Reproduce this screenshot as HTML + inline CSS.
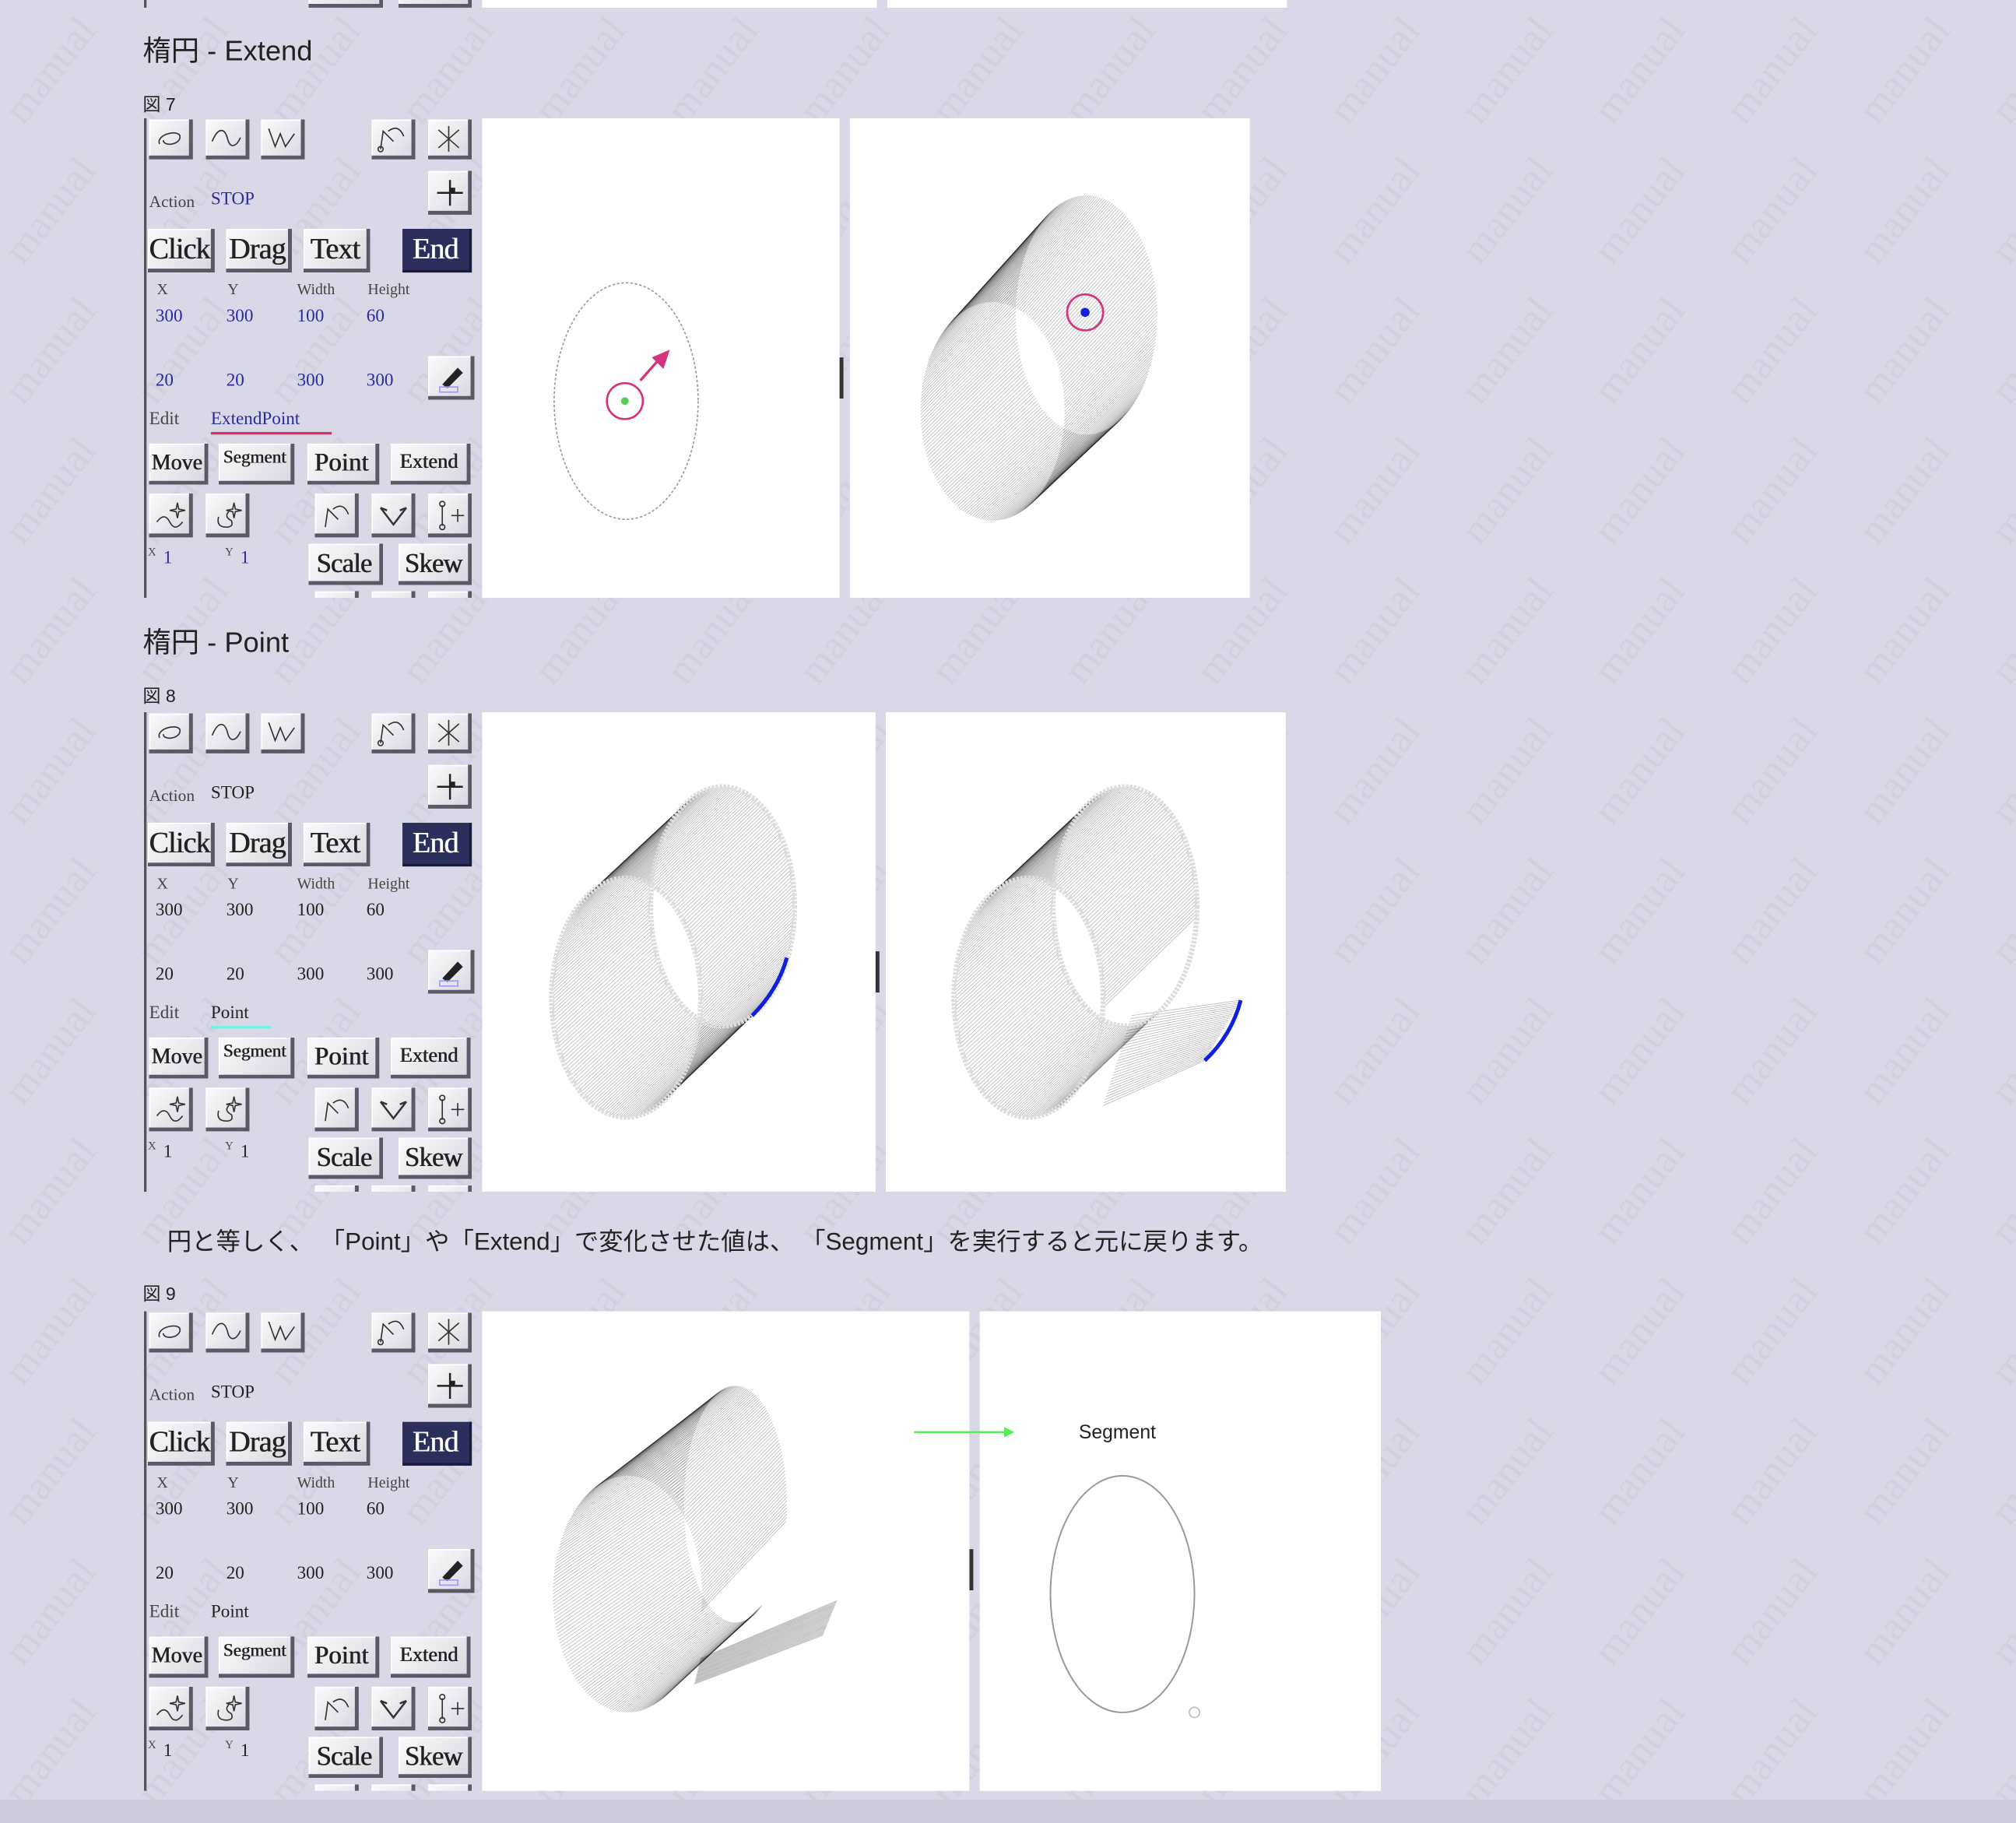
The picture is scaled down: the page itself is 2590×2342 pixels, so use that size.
<!DOCTYPE html>
<html><head><meta charset="utf-8"><style>
html,body{margin:0;padding:0;background:#d8d8e6;overflow:hidden}
#w{position:absolute;left:0;top:0;width:1568px;height:1418px;transform:scale(1.6518,1.6516);transform-origin:0 0;font-family:"Liberation Sans","Noto Sans CJK JP",sans-serif;color:#222}
.a{position:absolute}
.cv{position:absolute;background:#fff}
.p{position:absolute;left:112px;width:263px;height:373px;overflow:hidden;border-left:2px solid #555;box-sizing:border-box}
.b{position:absolute;background:linear-gradient(135deg,#fbfbff,#d6d6e0);box-shadow:inset -3px -3px 0 #5a5a66,inset 1px 1px 0 #fff;font-family:"Liberation Serif",serif;text-align:center;color:#222;box-sizing:border-box;padding-right:3px;text-shadow:0.4px 0 0 #222}
.ib{width:34px;height:31px}
.bb{height:34px;font-size:23px;line-height:32px;letter-spacing:-0.5px}
.sb{height:32px;font-size:17px;line-height:30px}
.end{background:#2c2e5c;box-shadow:inset -2px -2px 0 #1a1b3a;color:#fff;text-shadow:0.4px 0 0 #fff}
.t{position:absolute;font-family:"Liberation Serif",serif;font-size:14px;white-space:nowrap}
.l{position:absolute;font-family:"Liberation Serif",serif;font-size:12px;color:#444}
.bl{color:#2a2a9a}
.ib svg{position:absolute;left:3px;top:3px}
h2{position:absolute;margin:0;font-weight:normal;font-size:22px;left:111px}
.fig{position:absolute;left:111px;font-size:14px}
</style></head><body><div id="w">
<svg class="a" style="left:0;top:0" width="1568" height="1418">
<defs><pattern id="wm" width="103" height="109" patternUnits="userSpaceOnUse"><text x="0" y="0" transform="translate(18,98) rotate(-52)" font-family="Liberation Serif" font-size="32" fill="#d0d0de">manual</text></pattern></defs>
<rect width="1568" height="1418" fill="url(#wm)"/>
<rect y="1400" width="1568" height="18" fill="#cacad8"/>
</svg>

<div class="cv" style="left:375px;top:0;width:307px;height:6px"></div>
<div class="cv" style="left:690px;top:0;width:311px;height:6px"></div>
<div class="b" style="left:240px;top:-26px;width:58px;height:32px"></div>
<div class="b" style="left:310px;top:-26px;width:57px;height:32px"></div>
<div class="a" style="left:112px;top:0;width:2px;height:6px;background:#555"></div>

<h2 style="top:22px">楕円 - Extend</h2>
<div class="fig" style="top:71px">図 7</div>
<h2 style="top:482px">楕円 - Point</h2>
<div class="fig" style="top:531px">図 8</div>
<div class="a" style="left:130px;top:951px;font-size:19px;white-space:pre">円と等しく、 「Point」や「Extend」で変化させた値は、 「Segment」を実行すると元に戻ります。</div>
<div class="fig" style="top:996px">図 9</div>

<div class="cv" style="left:375px;top:92px;width:278px;height:373px"></div>
<div class="cv" style="left:661px;top:92px;width:311px;height:373px"></div>
<div class="a" style="left:653px;top:278px;width:3px;height:32px;background:#333"></div>
<div class="cv" style="left:375px;top:554px;width:306px;height:373px"></div>
<div class="cv" style="left:689px;top:554px;width:311px;height:373px"></div>
<div class="a" style="left:681px;top:740px;width:3px;height:32px;background:#333"></div>
<div class="cv" style="left:375px;top:1020px;width:379px;height:373px"></div>
<div class="cv" style="left:762px;top:1020px;width:312px;height:373px"></div>
<div class="a" style="left:754px;top:1205px;width:3px;height:32px;background:#333"></div>

<svg class="a" style="left:0;top:0" width="1568" height="1418">
<g id="g1"></g>
<ellipse cx="487" cy="312" rx="56" ry="92" fill="none" stroke="#999" stroke-dasharray="2 1.5"/>
<circle cx="486" cy="312" r="14" fill="none" stroke="#d6337a" stroke-width="1.6"/>
<circle cx="486" cy="312" r="3" fill="#5c5"/>
<line x1="498" y1="296" x2="514" y2="278" stroke="#d6337a" stroke-width="2"/>
<polygon points="521,272 507,278 516,287" fill="#d6337a"/>
<circle cx="844" cy="243" r="14" fill="none" stroke="#d6337a" stroke-width="1.6"/>
<circle cx="844" cy="243" r="3.5" fill="#1020e0"/>
<path d="M612,745 Q605,770 585,790" fill="none" stroke="#1020e0" stroke-width="3"/>
<path d="M965,778 Q958,805 937,825" fill="none" stroke="#1020e0" stroke-width="3"/>
<line x1="711" y1="1114" x2="782" y2="1114" stroke="#5e5" stroke-width="1.5"/>
<polygon points="789,1114 781,1110 781,1118" fill="#5e5"/>
<text x="839" y="1119" font-family="Liberation Sans" font-size="15" fill="#222">Segment</text>
<ellipse cx="873" cy="1240" rx="56" ry="92" fill="none" stroke="#999" stroke-width="1.2"/>
<circle cx="929" cy="1332" r="4" fill="none" stroke="#bbb"/>
</svg>

<!-- PANEL 1 -->
<div class="p" style="top:92px">
<div class="b ib" style="left:2px;top:1px"><svg width="26" height="24"><path d="M5,16 C2,8 22,4 21,11 C20,17 8,18 8,13" fill="none" stroke="#333"/></svg></div>
<div class="b ib" style="left:46px;top:1px"><svg width="26" height="24"><path d="M2,14 C7,2 12,4 14,12 C16,20 21,18 24,11" fill="none" stroke="#333"/></svg></div>
<div class="b ib" style="left:89px;top:1px"><svg width="26" height="24"><path d="M3,4 L8,18 L12,8 L16,18 L23,8" fill="none" stroke="#333"/></svg></div>
<div class="b ib" style="left:175px;top:1px"><svg width="26" height="24"><path d="M4,20 L6,6 L14,14 M10,6 Q18,0 22,10" fill="none" stroke="#333"/><circle cx="4" cy="20" r="2" fill="none" stroke="#333"/></svg></div>
<div class="b ib" style="left:219px;top:1px"><svg width="26" height="24"><path d="M13,2 V22 M5,5 L21,19 M21,5 L5,19" fill="none" stroke="#333"/></svg></div>
<div class="b" style="left:219px;top:41px;width:34px;height:34px"><svg class="a" style="left:4px;top:4px" width="26" height="26"><path d="M3,13 H23 M13,3 V23" stroke="#222" stroke-width="1.5"/><rect x="13" y="9" width="4" height="4" fill="#222"/></svg></div>
<div class="t" style="left:2px;top:57px;font-size:13px;color:#444">Action</div>
<div class="t bl" style="left:50px;top:56px">STOP</div>
<div class="b bb" style="left:1px;top:86px;width:52px">Click</div>
<div class="b bb" style="left:62px;top:86px;width:51px">Drag</div>
<div class="b bb" style="left:122px;top:86px;width:52px">Text</div>
<div class="b bb end" style="left:199px;top:86px;width:54px">End</div>
<div class="l" style="left:8px;top:126px">X</div><div class="l" style="left:63px;top:126px">Y</div><div class="l" style="left:117px;top:126px">Width</div><div class="l" style="left:172px;top:126px">Height</div>
<div class="t bl" style="left:7px;top:147px">300</div><div class="t bl" style="left:62px;top:147px">300</div><div class="t bl" style="left:117px;top:147px">100</div><div class="t bl" style="left:171px;top:147px">60</div>
<div class="t bl" style="left:7px;top:197px">20</div><div class="t bl" style="left:62px;top:197px">20</div><div class="t bl" style="left:117px;top:197px">300</div><div class="t bl" style="left:171px;top:197px">300</div>
<div class="b" style="left:219px;top:185px;width:36px;height:34px"><svg class="a" style="left:5px;top:4px" width="26" height="26"><path d="M6,18 L18,5 L22,9 L10,21 Z" fill="#222"/><rect x="4" y="20" width="14" height="4" fill="none" stroke="#99f"/></svg></div>
<div class="t" style="left:2px;top:227px;color:#444">Edit</div>
<div class="t bl" style="left:50px;top:227px">ExtendPoint</div>
<div class="a" style="left:50px;top:244px;width:94px;height:2px;background:#d6336c"></div>
<div class="b sb" style="left:2px;top:253px;width:46px">Move</div>
<div class="b sb" style="left:56px;top:253px;width:59px;font-size:14px;line-height:24px">Segment</div>
<div class="b sb" style="left:125px;top:253px;width:56px;font-size:20px">Point</div>
<div class="b sb" style="left:190px;top:253px;width:62px;font-size:16px">Extend</div>
<div class="b" style="left:2px;top:292px;width:34px;height:34px"><svg class="a" style="left:4px;top:4px" width="26" height="26"><path d="M2,18 Q8,10 12,18 T22,18 M18,3 L19,8 L24,9 L19,10 L18,15 L17,10 L12,9 L17,8 Z" fill="none" stroke="#333"/></svg></div>
<div class="b" style="left:46px;top:292px;width:34px;height:34px"><svg class="a" style="left:4px;top:4px" width="26" height="26"><path d="M6,14 Q4,22 12,22 Q18,22 16,17 Q10,14 14,10 M18,3 L19,8 L24,9 L19,10 L18,15 L17,10 L12,9 L17,8 Z" fill="none" stroke="#333"/></svg></div>
<div class="b" style="left:131px;top:292px;width:34px;height:34px"><svg class="a" style="left:4px;top:4px" width="26" height="26"><path d="M4,22 L6,8 L14,16 M10,8 Q18,2 22,12" fill="none" stroke="#333"/></svg></div>
<div class="b" style="left:175px;top:292px;width:34px;height:34px"><svg class="a" style="left:4px;top:4px" width="26" height="26"><path d="M3,7 L13,20 L23,7 M3,7 L8,9 M23,7 L18,9" fill="none" stroke="#333" stroke-width="1.5"/></svg></div>
<div class="b" style="left:219px;top:292px;width:34px;height:34px"><svg class="a" style="left:4px;top:4px" width="26" height="26"><path d="M7,5 V21 M14,13 H24 M19,8 V18" fill="none" stroke="#333"/><circle cx="7" cy="4" r="2" fill="none" stroke="#333"/><circle cx="7" cy="22" r="2" fill="none" stroke="#333"/></svg></div>
<div class="l" style="left:1px;top:332px;font-size:9px">X</div><div class="t bl" style="left:13px;top:335px">1</div>
<div class="l" style="left:61px;top:332px;font-size:9px">Y</div><div class="t bl" style="left:73px;top:335px">1</div>
<div class="b bb" style="left:126px;top:331px;width:58px;height:32px;line-height:30px;font-size:21px">Scale</div>
<div class="b bb" style="left:196px;top:331px;width:57px;height:32px;line-height:30px;font-size:21px">Skew</div>
<div class="b" style="left:131px;top:368px;width:34px;height:30px"></div><div class="b" style="left:175px;top:368px;width:34px;height:30px"></div><div class="b" style="left:219px;top:368px;width:34px;height:30px"></div>
</div>

<!-- PANEL 2 -->
<div class="p" style="top:554px">
<div class="b ib" style="left:2px;top:1px"><svg width="26" height="24"><path d="M5,16 C2,8 22,4 21,11 C20,17 8,18 8,13" fill="none" stroke="#333"/></svg></div>
<div class="b ib" style="left:46px;top:1px"><svg width="26" height="24"><path d="M2,14 C7,2 12,4 14,12 C16,20 21,18 24,11" fill="none" stroke="#333"/></svg></div>
<div class="b ib" style="left:89px;top:1px"><svg width="26" height="24"><path d="M3,4 L8,18 L12,8 L16,18 L23,8" fill="none" stroke="#333"/></svg></div>
<div class="b ib" style="left:175px;top:1px"><svg width="26" height="24"><path d="M4,20 L6,6 L14,14 M10,6 Q18,0 22,10" fill="none" stroke="#333"/><circle cx="4" cy="20" r="2" fill="none" stroke="#333"/></svg></div>
<div class="b ib" style="left:219px;top:1px"><svg width="26" height="24"><path d="M13,2 V22 M5,5 L21,19 M21,5 L5,19" fill="none" stroke="#333"/></svg></div>
<div class="b" style="left:219px;top:41px;width:34px;height:34px"><svg class="a" style="left:4px;top:4px" width="26" height="26"><path d="M3,13 H23 M13,3 V23" stroke="#222" stroke-width="1.5"/><rect x="13" y="9" width="4" height="4" fill="#222"/></svg></div>
<div class="t" style="left:2px;top:57px;font-size:13px;color:#444">Action</div>
<div class="t" style="left:50px;top:56px">STOP</div>
<div class="b bb" style="left:1px;top:86px;width:52px">Click</div>
<div class="b bb" style="left:62px;top:86px;width:51px">Drag</div>
<div class="b bb" style="left:122px;top:86px;width:52px">Text</div>
<div class="b bb end" style="left:199px;top:86px;width:54px">End</div>
<div class="l" style="left:8px;top:126px">X</div><div class="l" style="left:63px;top:126px">Y</div><div class="l" style="left:117px;top:126px">Width</div><div class="l" style="left:172px;top:126px">Height</div>
<div class="t" style="left:7px;top:147px">300</div><div class="t" style="left:62px;top:147px">300</div><div class="t" style="left:117px;top:147px">100</div><div class="t" style="left:171px;top:147px">60</div>
<div class="t" style="left:7px;top:197px">20</div><div class="t" style="left:62px;top:197px">20</div><div class="t" style="left:117px;top:197px">300</div><div class="t" style="left:171px;top:197px">300</div>
<div class="b" style="left:219px;top:185px;width:36px;height:34px"><svg class="a" style="left:5px;top:4px" width="26" height="26"><path d="M6,18 L18,5 L22,9 L10,21 Z" fill="#222"/><rect x="4" y="20" width="14" height="4" fill="none" stroke="#99f"/></svg></div>
<div class="t" style="left:2px;top:227px;color:#444">Edit</div>
<div class="t" style="left:50px;top:227px">Point</div>
<div class="a" style="left:50px;top:244px;width:47px;height:2px;background:#7ee"></div>
<div class="b sb" style="left:2px;top:253px;width:46px">Move</div>
<div class="b sb" style="left:56px;top:253px;width:59px;font-size:14px;line-height:24px">Segment</div>
<div class="b sb" style="left:125px;top:253px;width:56px;font-size:20px">Point</div>
<div class="b sb" style="left:190px;top:253px;width:62px;font-size:16px">Extend</div>
<div class="b" style="left:2px;top:292px;width:34px;height:34px"><svg class="a" style="left:4px;top:4px" width="26" height="26"><path d="M2,18 Q8,10 12,18 T22,18 M18,3 L19,8 L24,9 L19,10 L18,15 L17,10 L12,9 L17,8 Z" fill="none" stroke="#333"/></svg></div>
<div class="b" style="left:46px;top:292px;width:34px;height:34px"><svg class="a" style="left:4px;top:4px" width="26" height="26"><path d="M6,14 Q4,22 12,22 Q18,22 16,17 Q10,14 14,10 M18,3 L19,8 L24,9 L19,10 L18,15 L17,10 L12,9 L17,8 Z" fill="none" stroke="#333"/></svg></div>
<div class="b" style="left:131px;top:292px;width:34px;height:34px"><svg class="a" style="left:4px;top:4px" width="26" height="26"><path d="M4,22 L6,8 L14,16 M10,8 Q18,2 22,12" fill="none" stroke="#333"/></svg></div>
<div class="b" style="left:175px;top:292px;width:34px;height:34px"><svg class="a" style="left:4px;top:4px" width="26" height="26"><path d="M3,7 L13,20 L23,7 M3,7 L8,9 M23,7 L18,9" fill="none" stroke="#333" stroke-width="1.5"/></svg></div>
<div class="b" style="left:219px;top:292px;width:34px;height:34px"><svg class="a" style="left:4px;top:4px" width="26" height="26"><path d="M7,5 V21 M14,13 H24 M19,8 V18" fill="none" stroke="#333"/><circle cx="7" cy="4" r="2" fill="none" stroke="#333"/><circle cx="7" cy="22" r="2" fill="none" stroke="#333"/></svg></div>
<div class="l" style="left:1px;top:332px;font-size:9px">X</div><div class="t" style="left:13px;top:335px">1</div>
<div class="l" style="left:61px;top:332px;font-size:9px">Y</div><div class="t" style="left:73px;top:335px">1</div>
<div class="b bb" style="left:126px;top:331px;width:58px;height:32px;line-height:30px;font-size:21px">Scale</div>
<div class="b bb" style="left:196px;top:331px;width:57px;height:32px;line-height:30px;font-size:21px">Skew</div>
<div class="b" style="left:131px;top:368px;width:34px;height:30px"></div><div class="b" style="left:175px;top:368px;width:34px;height:30px"></div><div class="b" style="left:219px;top:368px;width:34px;height:30px"></div>
</div>

<!-- PANEL 3 -->
<div class="p" style="top:1020px">
<div class="b ib" style="left:2px;top:1px"><svg width="26" height="24"><path d="M5,16 C2,8 22,4 21,11 C20,17 8,18 8,13" fill="none" stroke="#333"/></svg></div>
<div class="b ib" style="left:46px;top:1px"><svg width="26" height="24"><path d="M2,14 C7,2 12,4 14,12 C16,20 21,18 24,11" fill="none" stroke="#333"/></svg></div>
<div class="b ib" style="left:89px;top:1px"><svg width="26" height="24"><path d="M3,4 L8,18 L12,8 L16,18 L23,8" fill="none" stroke="#333"/></svg></div>
<div class="b ib" style="left:175px;top:1px"><svg width="26" height="24"><path d="M4,20 L6,6 L14,14 M10,6 Q18,0 22,10" fill="none" stroke="#333"/><circle cx="4" cy="20" r="2" fill="none" stroke="#333"/></svg></div>
<div class="b ib" style="left:219px;top:1px"><svg width="26" height="24"><path d="M13,2 V22 M5,5 L21,19 M21,5 L5,19" fill="none" stroke="#333"/></svg></div>
<div class="b" style="left:219px;top:41px;width:34px;height:34px"><svg class="a" style="left:4px;top:4px" width="26" height="26"><path d="M3,13 H23 M13,3 V23" stroke="#222" stroke-width="1.5"/><rect x="13" y="9" width="4" height="4" fill="#222"/></svg></div>
<div class="t" style="left:2px;top:57px;font-size:13px;color:#444">Action</div>
<div class="t" style="left:50px;top:56px">STOP</div>
<div class="b bb" style="left:1px;top:86px;width:52px">Click</div>
<div class="b bb" style="left:62px;top:86px;width:51px">Drag</div>
<div class="b bb" style="left:122px;top:86px;width:52px">Text</div>
<div class="b bb end" style="left:199px;top:86px;width:54px">End</div>
<div class="l" style="left:8px;top:126px">X</div><div class="l" style="left:63px;top:126px">Y</div><div class="l" style="left:117px;top:126px">Width</div><div class="l" style="left:172px;top:126px">Height</div>
<div class="t" style="left:7px;top:147px">300</div><div class="t" style="left:62px;top:147px">300</div><div class="t" style="left:117px;top:147px">100</div><div class="t" style="left:171px;top:147px">60</div>
<div class="t" style="left:7px;top:197px">20</div><div class="t" style="left:62px;top:197px">20</div><div class="t" style="left:117px;top:197px">300</div><div class="t" style="left:171px;top:197px">300</div>
<div class="b" style="left:219px;top:185px;width:36px;height:34px"><svg class="a" style="left:5px;top:4px" width="26" height="26"><path d="M6,18 L18,5 L22,9 L10,21 Z" fill="#222"/><rect x="4" y="20" width="14" height="4" fill="none" stroke="#99f"/></svg></div>
<div class="t" style="left:2px;top:227px;color:#444">Edit</div>
<div class="t" style="left:50px;top:227px">Point</div>
<div class="b sb" style="left:2px;top:253px;width:46px">Move</div>
<div class="b sb" style="left:56px;top:253px;width:59px;font-size:14px;line-height:24px">Segment</div>
<div class="b sb" style="left:125px;top:253px;width:56px;font-size:20px">Point</div>
<div class="b sb" style="left:190px;top:253px;width:62px;font-size:16px">Extend</div>
<div class="b" style="left:2px;top:292px;width:34px;height:34px"><svg class="a" style="left:4px;top:4px" width="26" height="26"><path d="M2,18 Q8,10 12,18 T22,18 M18,3 L19,8 L24,9 L19,10 L18,15 L17,10 L12,9 L17,8 Z" fill="none" stroke="#333"/></svg></div>
<div class="b" style="left:46px;top:292px;width:34px;height:34px"><svg class="a" style="left:4px;top:4px" width="26" height="26"><path d="M6,14 Q4,22 12,22 Q18,22 16,17 Q10,14 14,10 M18,3 L19,8 L24,9 L19,10 L18,15 L17,10 L12,9 L17,8 Z" fill="none" stroke="#333"/></svg></div>
<div class="b" style="left:131px;top:292px;width:34px;height:34px"><svg class="a" style="left:4px;top:4px" width="26" height="26"><path d="M4,22 L6,8 L14,16 M10,8 Q18,2 22,12" fill="none" stroke="#333"/></svg></div>
<div class="b" style="left:175px;top:292px;width:34px;height:34px"><svg class="a" style="left:4px;top:4px" width="26" height="26"><path d="M3,7 L13,20 L23,7 M3,7 L8,9 M23,7 L18,9" fill="none" stroke="#333" stroke-width="1.5"/></svg></div>
<div class="b" style="left:219px;top:292px;width:34px;height:34px"><svg class="a" style="left:4px;top:4px" width="26" height="26"><path d="M7,5 V21 M14,13 H24 M19,8 V18" fill="none" stroke="#333"/><circle cx="7" cy="4" r="2" fill="none" stroke="#333"/><circle cx="7" cy="22" r="2" fill="none" stroke="#333"/></svg></div>
<div class="l" style="left:1px;top:332px;font-size:9px">X</div><div class="t" style="left:13px;top:335px">1</div>
<div class="l" style="left:61px;top:332px;font-size:9px">Y</div><div class="t" style="left:73px;top:335px">1</div>
<div class="b bb" style="left:126px;top:331px;width:58px;height:32px;line-height:30px;font-size:21px">Scale</div>
<div class="b bb" style="left:196px;top:331px;width:57px;height:32px;line-height:30px;font-size:21px">Skew</div>
<div class="b" style="left:131px;top:368px;width:34px;height:30px"></div><div class="b" style="left:175px;top:368px;width:34px;height:30px"></div><div class="b" style="left:219px;top:368px;width:34px;height:30px"></div>
</div>

</div>
<script>
(function(){
var g=document.getElementById('g1'),s='';
function cyl(f,b,N,skip){
 for(var i=0;i<N;i++){var t=i/N*2*Math.PI; if(skip&&skip(t))continue;
  var c=Math.cos(t),n=Math.sin(t);
  s+='<line x1="'+(f[0]+f[2]*c).toFixed(1)+'" y1="'+(f[1]+f[3]*n).toFixed(1)+'" x2="'+(b[0]+b[2]*c).toFixed(1)+'" y2="'+(b[1]+b[3]*n).toFixed(1)+'"/>';}
}
function ring(e){s+='<ellipse cx="'+e[0]+'" cy="'+e[1]+'" rx="'+e[2]+'" ry="'+e[3]+'" fill="none" stroke="#ddd" stroke-width="4" stroke-dasharray="2 1"/>';}
function flap(pts1,pts2,N){for(var i=0;i<=N;i++){var u=i/N;
 var x1=pts1[0][0]+(pts1[1][0]-pts1[0][0])*u,y1=pts1[0][1]+(pts1[1][1]-pts1[0][1])*u;
 var x2=pts2[0][0]+(pts2[1][0]-pts2[0][0])*u,y2=pts2[0][1]+(pts2[1][1]-pts2[0][1])*u;
 s+='<line x1="'+x1+'" y1="'+y1+'" x2="'+x2+'" y2="'+y2+'"/>';}}
s+='<g stroke="#000" stroke-opacity="0.28" stroke-width="0.5">';
cyl([772,320,56,85],[845,245,55,93],220);
cyl([487,776,58,93],[562,705,56,93],220);
cyl([800,776,58,93],[875,705,56,93],220,function(t){return t>0.1&&t<1.1;});
flap([[880,790],[858,860]],[[965,778],[937,825]],30);
cyl([488,1240,58,92],[572,1170,40,92],220,function(t){return t>0.15&&t<1.0;});
flap([[545,1290],[540,1310]],[[651,1245],[640,1272]],30);
s+='</g>';
ring([487,776,58,93]);ring([562,705,56,93]);ring([800,776,58,93]);ring([875,705,56,93]);
g.innerHTML=s;
})();
</script>
</body></html>
